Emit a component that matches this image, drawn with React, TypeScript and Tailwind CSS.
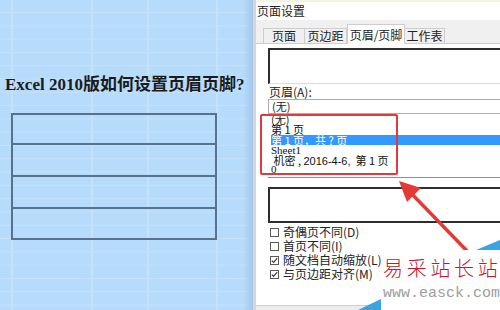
import React from "react";

const cjk = "font-['Noto_Sans_CJK_SC','Noto_Sans',sans-serif]";

function Check({ checked, label }: { checked: boolean; label: string }) {
  return (
    <div className="flex h-[14px] items-center">
      <div className="ml-[2px] flex h-[9px] w-[9px] items-center justify-center border border-[#5a5a5a] bg-white">
        {checked && (
          <svg width="7" height="7" viewBox="0 0 7 7">
            <path d="M0.8 3.6 L2.6 5.4 L6.2 1.2" fill="none" stroke="#333" strokeWidth="1.1" />
          </svg>
        )}
      </div>
      <span className={`ml-[4px] text-[12px] leading-[14px] text-[#222] ${cjk}`}>{label}</span>
    </div>
  );
}

export default function App() {
  return (
    <div className="relative flex h-[310px] w-[500px] overflow-hidden bg-white">
      {/* spreadsheet */}
      <div className="relative flex w-[253px] shrink-0 flex-col bg-[#b7dbfb] [background-image:linear-gradient(to_bottom,#c6e2fb_1px,transparent_1px),linear-gradient(to_right,transparent_11px,#c6e2fb_11px,#c6e2fb_13px,transparent_13px,transparent_91px,#c6e2fb_91px,#c6e2fb_93px,transparent_93px,transparent_147px,#c6e2fb_147px,#c6e2fb_149px,transparent_149px,transparent_216px,#c6e2fb_216px,#c6e2fb_218px,transparent_218px)] [background-size:100%_13.3px,100%_100%] [background-position:0_12px,0_0]">
        <div className="absolute right-0 top-0 h-full w-[10px] bg-gradient-to-r from-transparent to-[#a2c7ea]" />
        <div className="relative ml-[5px] mt-[73px] whitespace-nowrap font-['Liberation_Serif','Noto_Sans_CJK_SC',serif] text-[17px] font-bold leading-[24px] text-[#1b1b1b]">
          Excel 2010版如何设置页眉页脚?
        </div>
        <div className="relative ml-[11px] mt-[16px] w-[206px] border-2 border-[#56728f]">
          <div className="h-[30px] border-b-2 border-[#56728f]" />
          <div className="h-[32px] border-b-2 border-[#56728f]" />
          <div className="h-[32px] border-b-2 border-[#56728f]" />
          <div className="h-[29px]" />
        </div>
      </div>
      <div className="w-[3px] shrink-0 bg-[#d3d7dc]" />

      {/* dialog */}
      <div className="flex flex-1 flex-col bg-white">
        <div className={`h-[20px] border-t-2 border-[#f4f4df] pl-[1px] text-[12px] leading-[17px] text-[#222] ${cjk}`}>
          页面设置
        </div>
        <div className={`flex h-[23px] items-end bg-[#f0f0f0] pl-[7px] text-[12px] text-[#222] ${cjk}`}>
          <div className="flex h-[15px] w-[42px] items-center justify-center border border-b-0 border-[#cdcdcd] leading-[14px]">页面</div>
          <div className="flex h-[15px] w-[42px] items-center justify-center border border-b-0 border-l-0 border-[#cdcdcd] leading-[14px]">页边距</div>
          <div className="relative z-10 -mb-px flex h-[20px] w-[58px] items-center justify-center border border-b-0 border-[#cdcdcd] bg-white leading-[14px]">页眉/页脚</div>
          <div className="flex h-[15px] w-[40px] items-center justify-center border border-b-0 border-l-0 border-[#cdcdcd] leading-[14px]">工作表</div>
        </div>
        <div className="flex flex-1 flex-col border-t border-[#cdcdcd] bg-white pl-[12px]">
          <div className="mt-[4px] h-[36px] border-b border-l-2 border-t-2 border-b-[#dcdcdc] border-l-[#2e2e2e] border-t-[#2e2e2e]" />
          <div className={`h-[15px] pl-[1px] text-[12px] leading-[16px] text-[#222] ${cjk}`}>页眉(A):</div>
          <div className={`h-[15px] border border-r-0 border-[#adadad] pl-[3px] text-[11px] leading-[13px] text-[#222] ${cjk}`}>(无)</div>
          <div className={`flex h-[64px] flex-col border-b border-[#8f8f8f] text-[11px] text-[#111] ${cjk}`}>
            <div className="h-[10px] pl-[3px] leading-[10px]">(无)</div>
            <div className="h-[11px] pl-[3px] leading-[11px]">第 1 页</div>
            <div className="ml-[3px] h-[10px] bg-[#3399ff] leading-[10px] text-white">第 1 页，共 ? 页</div>
            <div className="h-[11px] pl-[3px] font-['Liberation_Serif',serif] text-[11px] leading-[11px]">Sheet1</div>
            <div className="h-[9px] whitespace-pre pl-[3px] leading-[9px]">
              {" 机密 , "}
              <span className="font-['Liberation_Sans',sans-serif]">2016-4-6,</span>
              {"  第 1 页"}
            </div>
            <div className="h-[9px] pl-[3px] font-['Liberation_Serif',serif] text-[11px] leading-[9px]">0</div>
          </div>
          <div className="mt-[9px] h-[36px] border-b-2 border-l-2 border-t-2 border-[#2e2e2e]" />
          <div className="mt-[2px] flex flex-col">
            <Check checked={false} label="奇偶页不同(D)" />
            <Check checked={false} label="首页不同(I)" />
            <Check checked={true} label="随文档自动缩放(L)" />
            <Check checked={true} label="与页边距对齐(M)" />
          </div>
        </div>
        <div className="h-[5px] border-t border-[#d0d0d0] bg-[#ececec]" />
      </div>

      {/* red highlight box */}
      <div className="absolute left-[260px] top-[114px] h-[61px] w-[138px] rounded-[2px] border-2 border-[#e0393e]" />

      {/* arrow and triangles */}
      <svg className="pointer-events-none absolute left-0 top-0" width="500" height="310" viewBox="0 0 500 310">
        <line x1="470" y1="254" x2="408" y2="190" stroke="#e33a35" strokeWidth="3.5" />
        <polygon points="399,181 421,188 407,202" fill="#e33a35" />
        <polygon points="476,250 500,240 500,250" fill="#3aa3e3" />
        <polygon points="358,310 381,299 381,310" fill="#3aa3e3" />
      </svg>

      {/* watermark */}
      <div className="absolute left-[381px] top-[250px] flex h-[60px] w-[119px] flex-col bg-white pl-[2px]">
        <div className={`mt-[5px] whitespace-nowrap text-[20px] font-light leading-[26px] tracking-[3.7px] text-[#c7152a] ${cjk}`}>易采站长站</div>
        <div className="mt-[5px] whitespace-nowrap font-['Liberation_Mono',monospace] text-[15px] leading-[16px] text-[#9d9d9d]">www.easck.com</div>
      </div>
    </div>
  );
}
